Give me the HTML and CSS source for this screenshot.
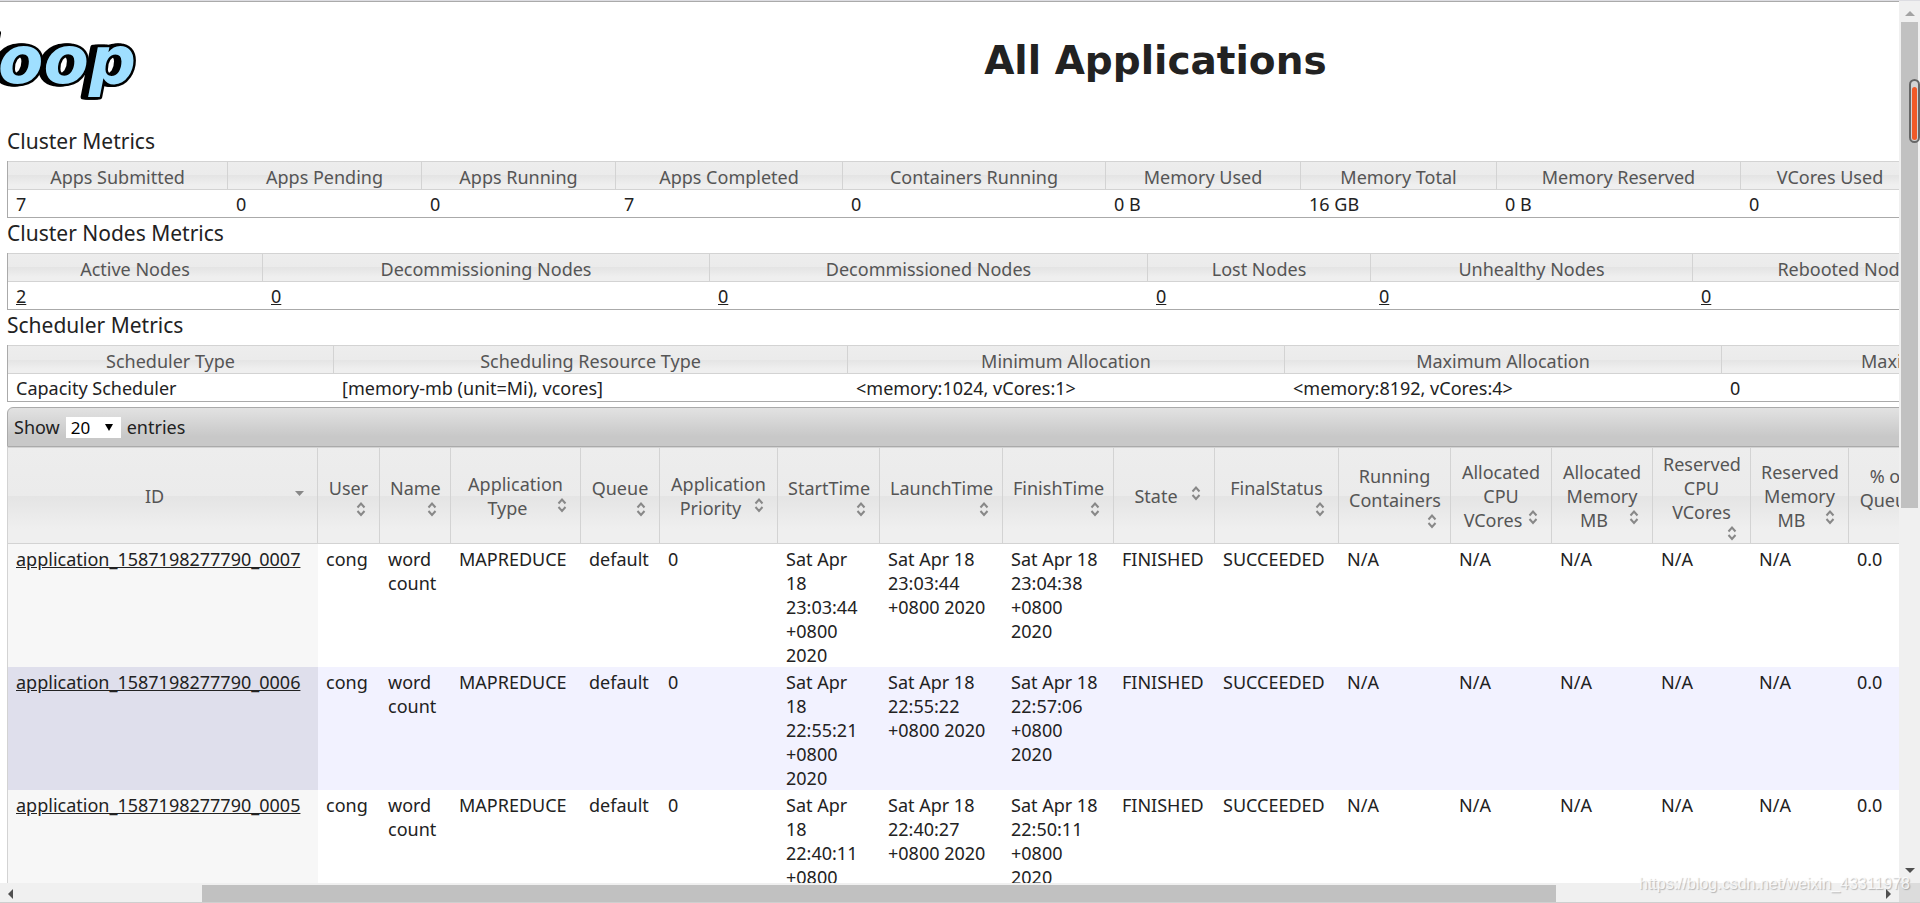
FILE: index.html
```
<!DOCTYPE html>
<html lang="en">
<head>
    <meta charset="UTF-8">
    <meta name="viewport" content="width=device-width, initial-scale=1.0">
    <title>All Applications</title>
    <link rel="stylesheet" href="styles.css">
</head>
<body>
    <svg class="defs" aria-hidden="true">
        <symbol id="sort-both" viewBox="0 0 16 16">
            <path d="M4.5 6.5 L8 2.5 L11.5 6.5 M4.5 10 L8 14 L11.5 10" fill="none" stroke="#888" stroke-width="2"/>
        </symbol>
        <symbol id="sort-desc" viewBox="0 0 16 16">
            <path d="M4 6 H13 L8.5 11 Z" fill="#888"/>
        </symbol>
    </svg>

    <main class="viewport">
        <div class="page">
            <header class="header">
                <svg class="logo" viewBox="0 0 140 104" role="img" aria-label="Hadoop">
                    <text class="logo-text" x="136" y="81" text-anchor="end">hadoop</text>
                </svg>
                <h1>All Applications</h1>
            </header>

            <h3>Cluster Metrics</h3>
            <table class="metrics">
                <colgroup>
                    <col class="w220"><col class="w194"><col class="w194"><col class="w227"><col class="w263"><col class="w195"><col class="w196"><col class="w244"><col class="w179"><col>
                </colgroup>
                <thead>
                    <tr>
                        <th>Apps Submitted</th>
                        <th>Apps Pending</th>
                        <th>Apps Running</th>
                        <th>Apps Completed</th>
                        <th>Containers Running</th>
                        <th>Memory Used</th>
                        <th>Memory Total</th>
                        <th>Memory Reserved</th>
                        <th>VCores Used</th>
                        <th>VCores Total</th>
                    </tr>
                </thead>
                <tbody>
                    <tr>
                        <td>7</td>
                        <td>0</td>
                        <td>0</td>
                        <td>7</td>
                        <td>0</td>
                        <td>0 B</td>
                        <td>16 GB</td>
                        <td>0 B</td>
                        <td>0</td>
                        <td>16</td>
                    </tr>
                </tbody>
            </table>

            <h3>Cluster Nodes Metrics</h3>
            <table class="metrics">
                <colgroup>
                    <col class="w255"><col class="w447"><col class="w438"><col class="w223"><col class="w322"><col>
                </colgroup>
                <thead>
                    <tr>
                        <th>Active Nodes</th>
                        <th>Decommissioning Nodes</th>
                        <th>Decommissioned Nodes</th>
                        <th>Lost Nodes</th>
                        <th>Unhealthy Nodes</th>
                        <th class="rebooted">Rebooted Nodes</th>
                    </tr>
                </thead>
                <tbody>
                    <tr>
                        <td><a href="#">2</a></td>
                        <td><a href="#">0</a></td>
                        <td><a href="#">0</a></td>
                        <td><a href="#">0</a></td>
                        <td><a href="#">0</a></td>
                        <td><a href="#">0</a></td>
                    </tr>
                </tbody>
            </table>

            <h3>Scheduler Metrics</h3>
            <table class="metrics">
                <colgroup>
                    <col class="w326"><col class="w514"><col class="w437"><col class="w437"><col>
                </colgroup>
                <thead>
                    <tr>
                        <th>Scheduler Type</th>
                        <th>Scheduling Resource Type</th>
                        <th>Minimum Allocation</th>
                        <th>Maximum Allocation</th>
                        <th>Maximum Cluster Application Priority</th>
                    </tr>
                </thead>
                <tbody>
                    <tr>
                        <td>Capacity Scheduler</td>
                        <td>[memory-mb (unit=Mi), vcores]</td>
                        <td>&lt;memory:1024, vCores:1&gt;</td>
                        <td>&lt;memory:8192, vCores:4&gt;</td>
                        <td>0</td>
                    </tr>
                </tbody>
            </table>

            <div class="toolbar">
                <label for="length">Show</label>
                <span class="select">
                    <select id="length">
                        <option>20</option>
                        <option>40</option>
                        <option>60</option>
                    </select>
                    <svg viewBox="0 0 8 8" aria-hidden="true"><path d="M0 0 H8 L4 7 Z"/></svg>
                </span>
                <span>entries</span>
            </div>

            <table class="apps">
                <colgroup>
                    <col class="w310"><col class="w62"><col class="w71"><col class="w130"><col class="w79"><col class="w118"><col class="w102"><col class="w123"><col class="w111"><col class="w101"><col class="w124"><col class="w112"><col class="w101"><col class="w101"><col class="w98"><col class="w98"><col class="w79"><col>
                </colgroup>
                <thead>
                    <tr>
                        <th>ID<svg><use href="#sort-desc"/></svg></th>
                        <th>User<br><svg><use href="#sort-both"/></svg></th>
                        <th>Name<br><svg><use href="#sort-both"/></svg></th>
                        <th>Application<br>Type<svg><use href="#sort-both"/></svg></th>
                        <th>Queue<br><svg><use href="#sort-both"/></svg></th>
                        <th>Application<br>Priority<svg><use href="#sort-both"/></svg></th>
                        <th>StartTime<br><svg><use href="#sort-both"/></svg></th>
                        <th>LaunchTime<br><svg><use href="#sort-both"/></svg></th>
                        <th>FinishTime<br><svg><use href="#sort-both"/></svg></th>
                        <th>State<svg><use href="#sort-both"/></svg></th>
                        <th>FinalStatus<br><svg><use href="#sort-both"/></svg></th>
                        <th>Running<br>Containers<br><svg><use href="#sort-both"/></svg></th>
                        <th>Allocated<br>CPU<br>VCores<svg><use href="#sort-both"/></svg></th>
                        <th>Allocated<br>Memory<br>MB<svg><use href="#sort-both"/></svg></th>
                        <th>Reserved<br>CPU<br>VCores<br><svg><use href="#sort-both"/></svg></th>
                        <th>Reserved<br>Memory<br>MB<svg><use href="#sort-both"/></svg></th>
                        <th>% of<br>Queue<br><svg><use href="#sort-both"/></svg></th>
                        <th>% of Cluster<svg><use href="#sort-both"/></svg></th>
                    </tr>
                </thead>
                <tbody>
                    <tr>
                        <td><a href="#">application_1587198277790_0007</a></td>
                        <td>cong</td>
                        <td>word count</td>
                        <td>MAPREDUCE</td>
                        <td>default</td>
                        <td>0</td>
                        <td>Sat Apr 18 23:03:44 +0800 2020</td>
                        <td>Sat Apr 18 23:03:44 +0800 2020</td>
                        <td>Sat Apr 18 23:04:38 +0800 2020</td>
                        <td>FINISHED</td>
                        <td>SUCCEEDED</td>
                        <td>N/A</td>
                        <td>N/A</td>
                        <td>N/A</td>
                        <td>N/A</td>
                        <td>N/A</td>
                        <td>0.0</td>
                        <td>0.0</td>
                    </tr>
                    <tr>
                        <td><a href="#">application_1587198277790_0006</a></td>
                        <td>cong</td>
                        <td>word count</td>
                        <td>MAPREDUCE</td>
                        <td>default</td>
                        <td>0</td>
                        <td>Sat Apr 18 22:55:21 +0800 2020</td>
                        <td>Sat Apr 18 22:55:22 +0800 2020</td>
                        <td>Sat Apr 18 22:57:06 +0800 2020</td>
                        <td>FINISHED</td>
                        <td>SUCCEEDED</td>
                        <td>N/A</td>
                        <td>N/A</td>
                        <td>N/A</td>
                        <td>N/A</td>
                        <td>N/A</td>
                        <td>0.0</td>
                        <td>0.0</td>
                    </tr>
                    <tr>
                        <td><a href="#">application_1587198277790_0005</a></td>
                        <td>cong</td>
                        <td>word count</td>
                        <td>MAPREDUCE</td>
                        <td>default</td>
                        <td>0</td>
                        <td>Sat Apr 18 22:40:11 +0800 2020</td>
                        <td>Sat Apr 18 22:40:27 +0800 2020</td>
                        <td>Sat Apr 18 22:50:11 +0800 2020</td>
                        <td>FINISHED</td>
                        <td>SUCCEEDED</td>
                        <td>N/A</td>
                        <td>N/A</td>
                        <td>N/A</td>
                        <td>N/A</td>
                        <td>N/A</td>
                        <td>0.0</td>
                        <td>0.0</td>
                    </tr>
                </tbody>
            </table>
        </div>
    </main>

    <div class="scroll-y">
        <svg class="arrow muted" viewBox="0 0 10 10"><path d="M0 8 L5 3 L10 8 Z"/></svg>
        <div class="thumb"></div>
        <svg class="arrow end" viewBox="0 0 10 10"><path d="M0 2 H10 L5 7 Z"/></svg>
    </div>
    <div class="scroll-x">
        <svg class="arrow" viewBox="0 0 10 10"><path d="M7 0 V10 L2 5 Z"/></svg>
        <div class="thumb"></div>
        <svg class="arrow end" viewBox="0 0 10 10"><path d="M3 0 V10 L8 5 Z"/></svg>
    </div>
    <div class="corner"></div>

    <div class="gauge"><div class="gauge-fill"></div></div>
    <div class="watermark">https://blog.csdn.net/weixin_43311978</div>
</body>
</html>
```
FILE: styles.css
```
:root {
    --text: #222222;
    --text-header: #555555;
    --border: #aaaaaa;
    --border-light: #d3d3d3;
    --track: #f0f0f0;
    --thumb: #c1c1c1;
    --header-bg: linear-gradient(#ededed, #ebebeb 50%, #e4e4e4 50%, #efefef 85%);
}

* {
    box-sizing: border-box;
}

body {
    margin: 0;
    height: 100vh;
    display: grid;
    grid-template-columns: minmax(0, 1fr) 21px;
    grid-template-rows: minmax(0, 1fr) 19px;
    border-top: 1px solid #dddde2;
    border-bottom: 1px solid #cfcfcf;
    overflow: hidden;
    background: #ffffff;
    color: var(--text);
    font-family: "Noto Sans", "Open Sans", sans-serif;
    font-size: 18px;
    line-height: 24px;
}

a {
    color: inherit;
}

.defs {
    position: absolute;
    width: 0;
    height: 0;
}

.viewport {
    overflow: hidden;
    border-top: 1px solid var(--border);
}

.page {
    width: 122%;
    padding-left: 7px;
}

.header {
    display: flex;
    align-items: center;
    height: 120px;
    margin-left: -7px;
    padding-right: 146px;
}

.logo {
    width: 140px;
    height: 104px;
    margin-bottom: 16px;
    flex: none;
}

.logo-text {
    font: italic bold 66px "DejaVu Sans", sans-serif;
    paint-order: stroke;
    fill: #9fdfff;
    stroke: #000000;
    stroke-width: 5px;
    stroke-linejoin: round;
    filter: drop-shadow(-3px 0 0 #000000) drop-shadow(-2px 0 0 #000000);
}

h1 {
    flex: 1;
    margin: 0 0 2px;
    text-align: center;
    font: bold 39px/48px "DejaVu Sans", sans-serif;
}

h3 {
    margin: 0;
    padding-bottom: 5px;
    font-size: 21px;
    font-weight: normal;
    line-height: 30px;
}

table {
    width: 100%;
    table-layout: fixed;
    border-collapse: separate;
    border-spacing: 0;
    border-left: 1px solid var(--border);
}

th {
    border: 1px solid var(--border-light);
    border-left: 0;
    background: var(--header-bg);
    color: var(--text-header);
    font-weight: normal;
}

.metrics {
    border-bottom: 1px solid var(--border);
}

.metrics th {
    padding: 3px 9px 0;
    white-space: nowrap;
}

.metrics td {
    padding: 2px 8px 1px;
}

.metrics th.rebooted {
    padding-right: 322px;
}

.header + h3 {
    margin-top: 4px;
}

.toolbar {
    display: flex;
    align-items: center;
    gap: 6px;
    height: 40px;
    margin-top: 5px;
    padding: 0 6px;
    border: 1px solid var(--border);
    border-radius: 6px 6px 0 0;
    background: linear-gradient(#e2e2e2, #c8c8c8 75%);
}

.select {
    position: relative;
    display: flex;
}

.select select {
    appearance: none;
    width: 55px;
    height: 21px;
    padding: 0 5px;
    border: 0;
    border-radius: 0;
    background: #ffffff;
    color: #000000;
    font: inherit;
    font-size: 17px;
    line-height: 21px;
}

.select svg {
    position: absolute;
    right: 8px;
    top: 7px;
    width: 8px;
    height: 8px;
}

.apps {
    border-left-color: var(--border-light);
}

.apps th {
    height: 97px;
    padding: 1px 10px 0;
}

.apps th svg {
    float: right;
    width: 16px;
    height: 16px;
    margin-top: 1px;
}

.apps td {
    padding: 3px 8px 0;
    vertical-align: top;
}

.apps td:first-child {
    background: #f7f7f7;
}

.apps tr:nth-child(even) td {
    background: #f2f2ff;
}

.apps tr:nth-child(even) td:first-child {
    background: #dfdfec;
}

.w62 { width: 62px; }
.w71 { width: 71px; }
.w79 { width: 79px; }
.w98 { width: 98px; }
.w101 { width: 101px; }
.w102 { width: 102px; }
.w111 { width: 111px; }
.w112 { width: 112px; }
.w118 { width: 118px; }
.w123 { width: 123px; }
.w124 { width: 124px; }
.w130 { width: 130px; }
.w179 { width: 179px; }
.w194 { width: 194px; }
.w195 { width: 195px; }
.w196 { width: 196px; }
.w220 { width: 220px; }
.w223 { width: 223px; }
.w227 { width: 227px; }
.w244 { width: 244px; }
.w255 { width: 255px; }
.w263 { width: 263px; }
.w310 { width: 310px; }
.w322 { width: 322px; }
.w326 { width: 326px; }
.w437 { width: 437px; }
.w438 { width: 438px; }
.w447 { width: 447px; }
.w514 { width: 514px; }

.scroll-y,
.scroll-x {
    display: flex;
    align-items: center;
    background: var(--track);
}

.scroll-y {
    flex-direction: column;
    padding: 7px 0;
}

.scroll-x {
    padding: 2px 6px 0;
}

.thumb {
    background: var(--thumb);
}

.scroll-y .thumb {
    width: 17px;
    height: 56%;
    margin-top: 4px;
}

.scroll-x .thumb {
    width: calc(72% - 5px);
    height: 17px;
    margin-left: 186px;
}

.arrow {
    width: 10px;
    height: 10px;
    flex: none;
    fill: #505050;
}

.arrow.muted {
    fill: #a3a3a3;
}

.scroll-y .end {
    margin-top: auto;
}

.scroll-x .end {
    margin-left: auto;
}

.corner {
    background: #dcdcdc;
}

.gauge {
    position: absolute;
    top: 79px;
    right: 0;
    width: 11px;
    height: 64px;
    padding: 6px 1px 1px;
    border: 2px solid #666666;
    border-radius: 6px;
    background: #d4d4d4;
}

.gauge-fill {
    height: 100%;
    border-radius: 3px;
    background: #f05a28;
}

.watermark {
    position: absolute;
    right: 10px;
    bottom: 7px;
    color: rgba(255, 255, 255, 0.8);
    font: 16px/24px "Liberation Sans", sans-serif;
    text-shadow: 1px 1px 1px rgba(0, 0, 0, 0.25);
}
```
